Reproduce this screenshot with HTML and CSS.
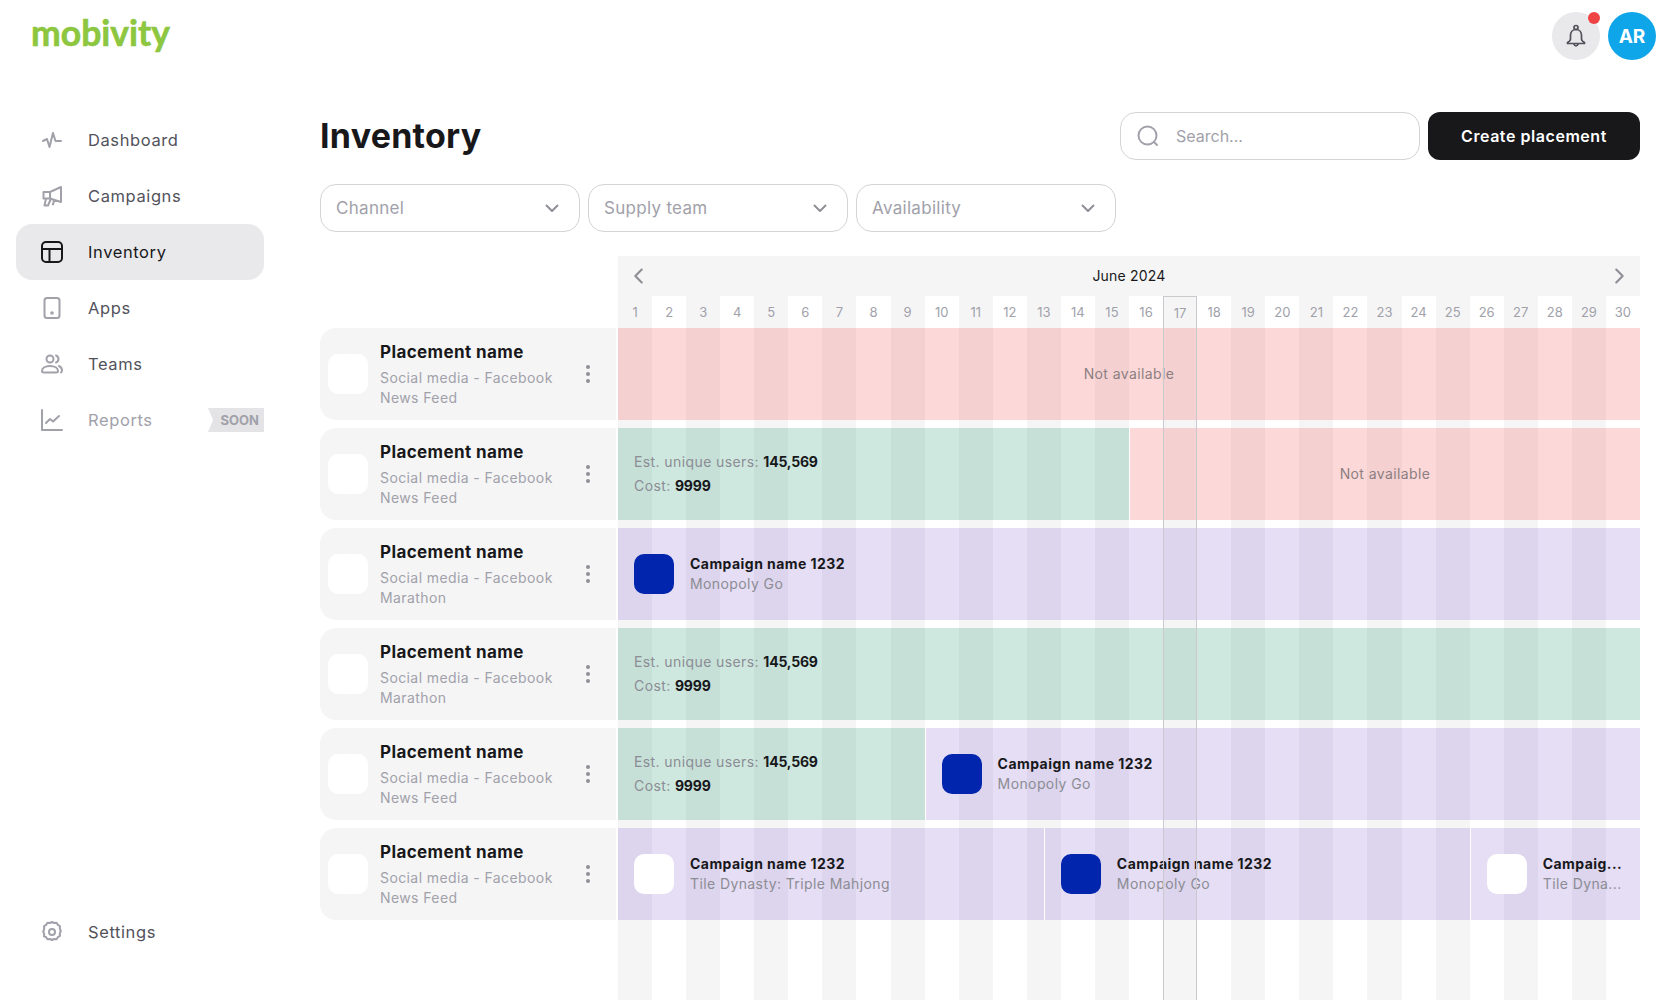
FILE: index.html
```html
<!DOCTYPE html>
<html lang="en">
<head>
  <meta charset="UTF-8">
  <meta name="viewport" content="width=device-width, initial-scale=1.0">
  <title>Inventory</title>
  <link rel="stylesheet" href="styles.css">
</head>
<body>
  <header class="topbar">
    <div class="logo">mobivity</div>
    <div class="user-actions">
      <div class="bell">
        <svg class="icon" viewBox="0 0 24 24"><circle cx="12" cy="3.500" r="2"/><path d="M12 5.500c-3.500 0-5.500 2.500-5.500 6v3.500c0 1.500-1 2.500-3 3.500v1h17v-1c-2-1-3-2-3-3.500v-3.500c0-3.500-2-6-5.500-6zM10 20.500a2.200 2.200 0 0 0 4 0"/></svg>
        <span class="bell-dot"></span>
      </div>
      <div class="avatar">AR</div>
    </div>
  </header>

  <div class="layout">
    <nav class="sidebar">
      <ul class="nav-list">
        <li class="nav-item">
          <svg class="icon" viewBox="0 0 24 24"><path d="M3 13l4-2 2.500 8L13 5l2.500 8H21"/></svg>
          Dashboard
        </li>
        <li class="nav-item">
          <svg class="icon" viewBox="0 0 24 24"><path d="M21 3L10 8H3.500v6.500H10L21 18zM10 8v6.500M6 14.500L4.500 21.500h3.500l3-7M14 16.500l-1 4"/></svg>
          Campaigns
        </li>
        <li class="nav-item active">
          <svg class="icon" viewBox="0 0 24 24"><rect x="2" y="2" width="20" height="20" rx="4"/><path d="M2 9h20M9.500 9v13"/></svg>
          Inventory
        </li>
        <li class="nav-item">
          <svg class="icon" viewBox="0 0 24 24"><rect x="4.500" y="2" width="15" height="20" rx="2.500"/><circle class="solid" cx="12" cy="17" r=".8"/></svg>
          Apps
        </li>
        <li class="nav-item">
          <svg class="icon" viewBox="0 0 24 24"><circle cx="10" cy="7" r="3.500"/><path d="M2 19c0-3 3.500-5 8-5s8 2 8 5c0 1-1 1.500-2 1.500H4c-1 0-2-.5-2-1.500zM16 3.500c1.500.5 2.500 2 2.500 3.500s-1 3-2.500 3.500M19 14c1.800.8 3 2.500 3 4.500 0 .8-.3 1.500-1 2"/></svg>
          Teams
        </li>
        <li class="nav-item muted">
          <svg class="icon" viewBox="0 0 24 24"><path d="M2 2v20h20M6 15l4-4 3 2.500L19 8"/></svg>
          Reports
          <span class="soon">SOON</span>
        </li>
      </ul>
      <div class="nav-item">
        <svg class="icon" viewBox="0 0 24 24"><circle cx="12" cy="12" r="3"/><path d="M10 3l2-1 2 1 2.500-.2 1.300 2 2.200 1.300-.2 2.500 1 2.400-1 2.400.2 2.500-2.200 1.300-1.300 2-2.500-.2-2 1-2-1-2.500.2-1.300-2L4 16.400 4.200 13.900l-1-2.400 1-2.400L4 6.100l2.200-1.300 1.300-2z"/></svg>
        Settings
      </div>
    </nav>

    <main class="content">
      <div class="title-row">
        <h1>Inventory</h1>
        <div class="search">
          <svg class="icon" viewBox="0 0 24 24"><circle cx="11.500" cy="11.500" r="9"/><path d="M18 18l3 3"/></svg>
          <span>Search...</span>
        </div>
        <button class="create-btn">Create placement</button>
      </div>

      <div class="filters">
        <div class="filter">Channel <svg class="icon chevron" viewBox="0 0 24 24"><path d="M6.500 9.500l5.500 5.500 5.500-5.500"/></svg></div>
        <div class="filter">Supply team <svg class="icon chevron" viewBox="0 0 24 24"><path d="M6.500 9.500l5.500 5.500 5.500-5.500"/></svg></div>
        <div class="filter">Availability <svg class="icon chevron" viewBox="0 0 24 24"><path d="M6.500 9.500l5.500 5.500 5.500-5.500"/></svg></div>
      </div>

      <div class="board">
        <div class="placements">
          <div class="placement">
            <div class="thumb"></div>
            <div class="placement-text"><h3>Placement name</h3><p>Social media - Facebook<br>News Feed</p></div>
            <span class="dots"><i></i><i></i><i></i></span>
          </div>
          <div class="placement">
            <div class="thumb"></div>
            <div class="placement-text"><h3>Placement name</h3><p>Social media - Facebook<br>News Feed</p></div>
            <span class="dots"><i></i><i></i><i></i></span>
          </div>
          <div class="placement">
            <div class="thumb"></div>
            <div class="placement-text"><h3>Placement name</h3><p>Social media - Facebook<br>Marathon</p></div>
            <span class="dots"><i></i><i></i><i></i></span>
          </div>
          <div class="placement">
            <div class="thumb"></div>
            <div class="placement-text"><h3>Placement name</h3><p>Social media - Facebook<br>Marathon</p></div>
            <span class="dots"><i></i><i></i><i></i></span>
          </div>
          <div class="placement">
            <div class="thumb"></div>
            <div class="placement-text"><h3>Placement name</h3><p>Social media - Facebook<br>News Feed</p></div>
            <span class="dots"><i></i><i></i><i></i></span>
          </div>
          <div class="placement">
            <div class="thumb"></div>
            <div class="placement-text"><h3>Placement name</h3><p>Social media - Facebook<br>News Feed</p></div>
            <span class="dots"><i></i><i></i><i></i></span>
          </div>
        </div>

        <div class="timeline">
          <div class="month">
            <svg class="icon arrow" viewBox="0 0 24 24"><path d="M15 5l-7 7 7 7"/></svg>
            <span>June 2024</span>
            <svg class="icon arrow" viewBox="0 0 24 24"><path d="M9 5l7 7-7 7"/></svg>
          </div>
          <div class="days">
            <span>1</span><span>2</span><span>3</span><span>4</span><span>5</span><span>6</span><span>7</span><span>8</span><span>9</span><span>10</span>
            <span>11</span><span>12</span><span>13</span><span>14</span><span>15</span><span>16</span><span class="today-num">17</span><span>18</span><span>19</span><span>20</span>
            <span>21</span><span>22</span><span>23</span><span>24</span><span>25</span><span>26</span><span>27</span><span>28</span><span>29</span><span>30</span>
          </div>

          <div class="track">
            <div class="bar red" style="width: 100%"><span class="na">Not available</span></div>
          </div>
          <div class="track">
            <div class="bar green" style="width: 50%">
              <div><p>Est. unique users: <b>145,569</b></p><p>Cost: <b>9999</b></p></div>
            </div>
            <div class="bar red" style="width: 50%"><span class="na">Not available</span></div>
          </div>
          <div class="track">
            <div class="bar purple" style="width: 100%">
              <div class="camp-icon blue"></div>
              <div class="camp-text"><h4>Campaign name 1232</h4><p>Monopoly Go</p></div>
            </div>
          </div>
          <div class="track">
            <div class="bar green" style="width: 100%">
              <div><p>Est. unique users: <b>145,569</b></p><p>Cost: <b>9999</b></p></div>
            </div>
          </div>
          <div class="track">
            <div class="bar green" style="width: 30%">
              <div><p>Est. unique users: <b>145,569</b></p><p>Cost: <b>9999</b></p></div>
            </div>
            <div class="bar purple" style="width: 70%">
              <div class="camp-icon blue"></div>
              <div class="camp-text"><h4>Campaign name 1232</h4><p>Monopoly Go</p></div>
            </div>
          </div>
          <div class="track">
            <div class="bar purple" style="width: 41.67%">
              <div class="camp-icon"></div>
              <div class="camp-text"><h4>Campaign name 1232</h4><p>Tile Dynasty: Triple Mahjong</p></div>
            </div>
            <div class="bar purple" style="width: 41.67%">
              <div class="camp-icon blue"></div>
              <div class="camp-text"><h4>Campaign name 1232</h4><p>Monopoly Go</p></div>
            </div>
            <div class="bar purple" style="width: 16.66%">
              <div class="camp-icon"></div>
              <div class="camp-text"><h4>Campaig...</h4><p>Tile Dyna...</p></div>
            </div>
          </div>

          <div class="today"></div>
        </div>
      </div>
    </main>
  </div>
</body>
</html>
```

FILE: styles.css
```css
* {
  box-sizing: border-box;
}
body {
  font-family: 'Inter', 'Liberation Sans', sans-serif;
  margin: 0;
  height: 100vh;
  overflow: hidden;
  background: #fff;
  color: #18181b;
  display: flex;
  flex-direction: column;
}
p, h1, h3, h4, ul {
  margin: 0;
  padding: 0;
}
.icon {
  width: 24px;
  height: 24px;
  flex-shrink: 0;
  fill: none;
  stroke: currentColor;
  stroke-width: 2;
  stroke-linecap: round;
  stroke-linejoin: round;
}
.icon .solid {
  fill: currentColor;
}

/* top bar */
.topbar {
  height: 112px;
  flex-shrink: 0;
  display: flex;
  justify-content: space-between;
  align-items: flex-start;
  padding: 11px 24px 0 31px;
}
.logo {
  font-family: 'Lato', sans-serif;
  font-size: 35.5px;
  font-weight: 700;
  line-height: 44px;
  color: #8dc63f;
  -webkit-text-stroke: .6px #8dc63f;
}
.user-actions {
  display: flex;
  gap: 8px;
  margin-top: 1px;
}
.bell {
  position: relative;
  width: 48px;
  height: 48px;
  border-radius: 50%;
  background: #e9e9ec;
  color: #52525b;
  display: flex;
  align-items: center;
  justify-content: center;
}
.bell .icon {
  stroke-width: 1.7;
}
.bell-dot {
  position: absolute;
  top: 0;
  right: 0;
  width: 12px;
  height: 12px;
  border-radius: 50%;
  background: #ef4444;
}
.avatar {
  width: 48px;
  height: 48px;
  border-radius: 50%;
  background: #0ea5e9;
  color: #fff;
  font-weight: 700;
  font-size: 19px;
  display: flex;
  align-items: center;
  justify-content: center;
}

.layout {
  flex: 1;
  display: flex;
  min-height: 0;
}

/* sidebar */
.sidebar {
  width: 320px;
  flex-shrink: 0;
  padding: 0 56px 40px 16px;
  display: flex;
  flex-direction: column;
  justify-content: space-between;
}
.nav-list {
  list-style: none;
}
.nav-item {
  height: 56px;
  padding-left: 24px;
  border-radius: 16px;
  display: flex;
  align-items: center;
  gap: 24px;
  font-size: 16.5px;
  letter-spacing: .6px;
  color: #52525b;
}
.nav-item .icon {
  color: #a1a1aa;
}
.nav-item.active {
  background: #e9e9ec;
  color: #18181b;
}
.nav-item.active .icon {
  color: #18181b;
}
.nav-item.muted {
  color: #a1a1aa;
}
.soon {
  margin-left: auto;
  width: 56px;
  height: 24px;
  padding-right: 5px;
  background: #e4e4e7;
  clip-path: polygon(0 0, 100% 0, 100% 100%, 0 100%, 5px 50%);
  color: #a1a1aa;
  font-size: 13px;
  font-weight: 700;
  letter-spacing: 0;
  display: flex;
  align-items: center;
  justify-content: flex-end;
}

/* main */
.content {
  flex: 1;
  min-width: 0;
  padding-right: 40px;
  display: flex;
  flex-direction: column;
}
.title-row {
  height: 48px;
  display: flex;
  align-items: center;
  gap: 8px;
  margin-bottom: 24px;
}
h1 {
  margin: 0 auto 2px 0;
  font-size: 34px;
  font-weight: 700;
  letter-spacing: .25px;
}
.search {
  width: 300px;
  height: 48px;
  border: 1px solid #d4d4d8;
  border-radius: 16px;
  padding-left: 15px;
  display: flex;
  align-items: center;
  gap: 16px;
  color: #a1a1aa;
  font-size: 16px;
}
.create-btn {
  width: 212px;
  height: 48px;
  border: 0;
  border-radius: 12px;
  background: #18181b;
  color: #fff;
  font-family: inherit;
  font-size: 16px;
  font-weight: 600;
  letter-spacing: .55px;
}
.filters {
  display: flex;
  gap: 8px;
  margin-bottom: 24px;
}
.filter {
  width: 260px;
  height: 48px;
  border: 1px solid #d4d4d8;
  border-radius: 16px;
  padding: 0 15px;
  display: flex;
  align-items: center;
  justify-content: space-between;
  color: #a1a1aa;
  font-size: 17px;
  letter-spacing: .3px;
}
.chevron {
  color: #8f8f96;
}

/* board */
.board {
  flex: 1;
  display: flex;
  min-height: 0;
}
.placements {
  width: 298px;
  flex-shrink: 0;
  padding: 72px 2px 0 0;
  display: flex;
  flex-direction: column;
  gap: 8px;
}
.placement {
  height: 92px;
  background: #f5f5f6;
  border-radius: 16px 0 0 16px;
  padding-left: 8px;
  display: flex;
  align-items: center;
  gap: 12px;
}
.thumb {
  width: 40px;
  height: 40px;
  border-radius: 10px;
  background: #fff;
  flex-shrink: 0;
}
.placement-text {
  flex: 1;
}
.placement-text h3 {
  font-size: 17px;
  font-weight: 700;
  line-height: 24px;
  letter-spacing: .4px;
  margin: -1px 0 4px;
}
.placement-text p {
  font-size: 14px;
  line-height: 20px;
  letter-spacing: .4px;
  color: #a1a1aa;
}
.dots {
  width: 30px;
  display: flex;
  flex-direction: column;
  align-items: flex-start;
  gap: 3px;
}
.dots i {
  width: 4px;
  height: 4px;
  border-radius: 50%;
  background: #8f8f96;
}

/* timeline */
.timeline {
  position: relative;
  flex: 1;
  min-width: 0;
  background: repeating-linear-gradient(90deg, #f5f5f6 0, #f5f5f6 3.3333%, #fff 3.3333%, #fff 6.6666%);
  display: flex;
  flex-direction: column;
  gap: 8px;
}
.month {
  height: 40px;
  margin-bottom: -8px;
  padding: 0 10px;
  background: #f5f5f6;
  display: flex;
  align-items: center;
  justify-content: space-between;
  font-size: 14px;
  letter-spacing: .2px;
}
.month span {
  margin-bottom: 1px;
}
.arrow {
  width: 22px;
  height: 22px;
  stroke-width: 2.400;
  color: #8f8f96;
}
.days {
  height: 32px;
  margin-bottom: -8px;
  display: grid;
  grid-template-columns: repeat(30, 1fr);
  align-items: center;
  text-align: center;
  font-size: 13px;
  color: #a1a1aa;
}
.today-num {
  padding-top: 2px;
}
.track {
  height: 92px;
  display: flex;
}
.bar {
  min-width: 0;
  padding: 0 16px;
  display: flex;
  align-items: center;
  gap: 16px;
  font-size: 14px;
  letter-spacing: .4px;
  color: #8c8c94;
}
.bar + .bar {
  border-left: 1px solid #fff;
  background-clip: padding-box;
}
.bar p {
  line-height: 24px;
}
.bar b {
  color: #18181b;
  letter-spacing: -.2px;
}
.red {
  padding-bottom: 2px;
  background-color: rgba(240, 60, 60, .2);
  justify-content: center;
}
.green {
  background-color: rgba(30, 150, 110, .22);
}
.purple {
  background-color: rgba(110, 70, 200, .18);
}
.na {
  color: #8c7f82;
}
.camp-icon {
  width: 40px;
  height: 40px;
  border-radius: 10px;
  background: #fff;
  flex-shrink: 0;
}
.camp-icon.blue {
  background: #0225ae;
}
.camp-text {
  min-width: 0;
}
.camp-text h4, .camp-text p {
  white-space: nowrap;
  font-size: 14px;
  line-height: 20px;
}
.camp-text h4 {
  font-weight: 700;
  color: #18181b;
  letter-spacing: .45px;
}
.today {
  position: absolute;
  top: 40px;
  bottom: 0;
  left: calc(100% * 16 / 30);
  width: calc(100% / 30);
  border: 1px solid #c9c9ce;
  border-bottom: 0;
}
```
